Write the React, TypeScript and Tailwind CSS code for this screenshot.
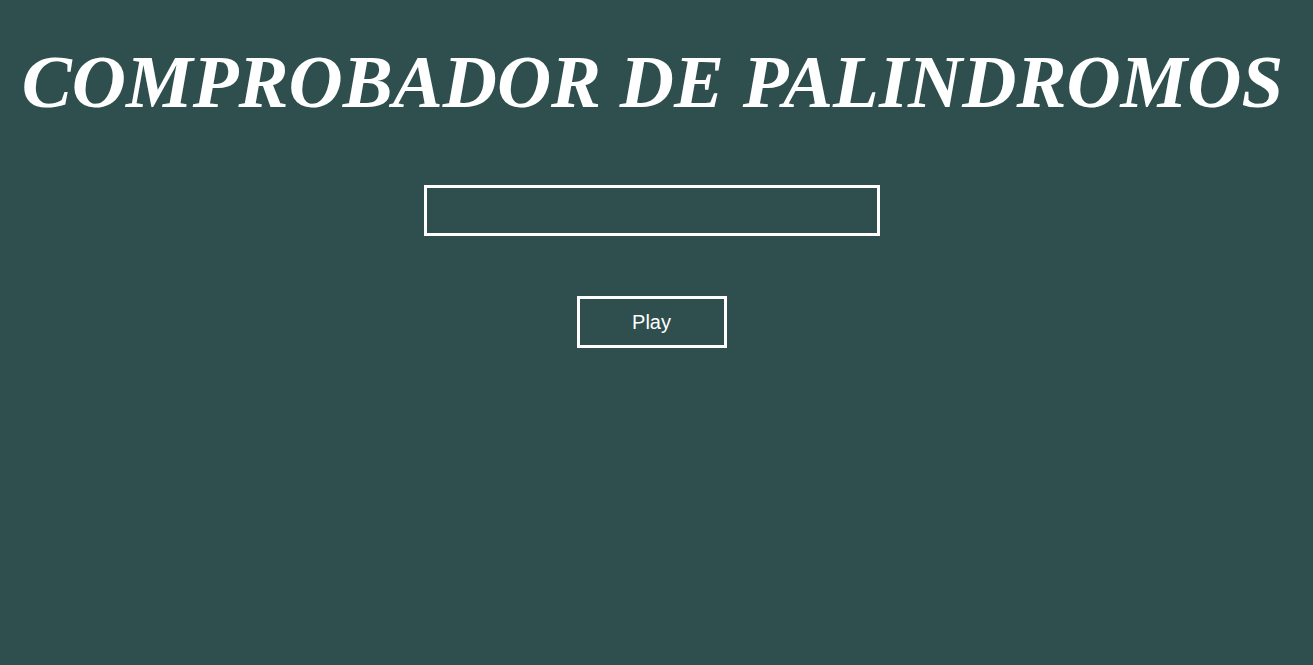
import React from "react";

export default function App() {
  return (
    <div className="min-h-[665px] w-full overflow-hidden bg-[#2f4f4f] flex flex-col items-center pt-[40px] pr-[8px]">
      <h1 className="text-white text-[75px] leading-[83px] font-bold italic font-[Liberation_Serif] whitespace-nowrap">
        COMPROBADOR DE PALINDROMOS
      </h1>
      <input
        type="text"
        className="mt-[62px] mr-[2px] w-[456px] h-[51px] border-[3px] border-white bg-transparent text-white outline-none px-2 font-['Liberation_Sans',Arial,sans-serif]"
      />
      <button className="mt-[60px] mr-[2px] w-[150px] h-[52px] border-[3px] border-white bg-transparent text-white text-[20px] font-['Liberation_Sans',Arial,sans-serif]">
        Play
      </button>
    </div>
  );
}
